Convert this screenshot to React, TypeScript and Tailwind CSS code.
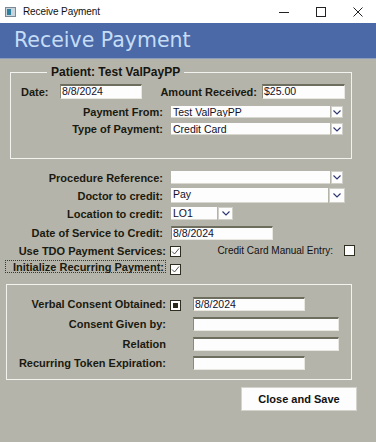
import React from 'react'

const LABEL = "text-[11px] font-bold text-[#1a1a10] leading-[12px] whitespace-nowrap"

function TextBox({ value = '', w, h = 15 }: { value?: string; w: number; h?: number }) {
    return (
        <div
            style={{ width: w, height: h }}
            className="bg-[#fdfdfd] border-t-2 border-l border-t-[#6e6e5e] border-l-[#8a8a7a] border-b border-r border-b-[#e8e8e0] border-r-[#e8e8e0] text-[10.5px] leading-[11px] text-[#10102a] pl-[1px] overflow-hidden whitespace-nowrap"
        >
            {value}
        </div>
    )
}

function Chevron() {
    return (
        <svg width="8" height="5" viewBox="0 0 8 5">
            <polyline points="0.5,0.5 4,4 7.5,0.5" fill="none" stroke="#2b3570" strokeWidth="1.1" />
        </svg>
    )
}

function Combo({ value = '', w, h = 12, btn = 12 }: { value?: string; w: number; h?: number; btn?: number }) {
    return (
        <div style={{ width: w, height: h }} className="flex gap-[1px]">
            <div className="flex-1 bg-[#fdfdfd] border-b border-[#d8d8d0] text-[10.5px] leading-[12px] text-[#10102a] pl-[2px] overflow-hidden whitespace-nowrap">
                {value}
            </div>
            <div style={{ width: btn }} className="bg-[#fdfdfd] border border-[#d0d0c8] flex items-center justify-center">
                <Chevron />
            </div>
        </div>
    )
}

function Check({ state }: { state: 'on' | 'off' | 'fill' }) {
    return (
        <div className="w-[11px] h-[11px] bg-[#fdfdfd] border border-[#2e2e20] flex items-center justify-center shrink-0">
            {state === 'on' && (
                <svg width="9" height="9" viewBox="0 0 9 9">
                    <polyline points="1,4.5 3.5,7 8,1.5" fill="none" stroke="#555550" strokeWidth="1" />
                </svg>
            )}
            {state === 'fill' && <div className="w-[5px] h-[5px] bg-[#2a2a1c]" />}
        </div>
    )
}

export default function App() {
    return (
        <div className="w-[376px] h-[442px] bg-[#b5b4aa] overflow-hidden font-['Liberation_Sans',Arial,sans-serif]">
            {/* window title bar */}
            <div className="h-[23px] bg-white flex items-center">
                <div className="ml-[5px] w-[11px] h-[10px] bg-[#c8d4dc] border border-[#7a8898] flex items-center pl-[1px]">
                    <div className="w-[4px] h-[6px] bg-[#2f7f9f]" />
                </div>
                <span className="ml-[7px] text-[10px] text-[#111] tracking-[-0.1px]">Receive Payment</span>
                <div className="ml-auto flex items-center">
                    <svg width="12" height="12" viewBox="0 0 12 12" className="mr-[25px]">
                        <line x1="1" y1="6.5" x2="11" y2="6.5" stroke="#222" strokeWidth="1" />
                    </svg>
                    <svg width="12" height="12" viewBox="0 0 12 12" className="mr-[25px]">
                        <rect x="1.5" y="1.5" width="9" height="9" fill="none" stroke="#222" strokeWidth="1" />
                    </svg>
                    <svg width="12" height="12" viewBox="0 0 12 12" className="mr-[12px]">
                        <path d="M1.5 1.5 L10.5 10.5 M10.5 1.5 L1.5 10.5" stroke="#222" strokeWidth="1" />
                    </svg>
                </div>
            </div>

            {/* header */}
            <div className="h-[36px] bg-[#4a69a6] border-b border-[#8c9cbc] flex items-center pl-[14px]">
                <span className="text-[20.5px] text-[#c5dcf7] font-['DejaVu_Sans',sans-serif] leading-none">Receive Payment</span>
            </div>

            {/* patient group */}
            <fieldset className="ml-[10px] mt-[6px] w-[342px] border border-[#f2f2ee] pb-[23px] px-0 m-0">
                <legend className="ml-[36px] px-[4px] text-[12px] font-bold text-[#151510] leading-[14px]">
                    Patient: Test ValPayPP
                </legend>
                <div className="flex items-center mt-[5px]">
                    <div className={`${LABEL} w-[49px] pl-[10px]`}>Date:</div>
                    <TextBox value="8/8/2024" w={82} />
                    <div className={`${LABEL} w-[120px] text-right pr-[5px]`}>Amount Received:</div>
                    <TextBox value="$25.00" w={83} />
                </div>
                <div className="flex items-center mt-[7px]">
                    <div className={`${LABEL} w-[152px] text-right`}>Payment From:</div>
                    <div className="ml-[8px]"><Combo value="Test ValPayPP" w={172} /></div>
                </div>
                <div className="flex items-center mt-[5px]">
                    <div className={`${LABEL} w-[152px] text-right`}>Type of Payment:</div>
                    <div className="ml-[8px]"><Combo value="Credit Card" w={172} /></div>
                </div>
            </fieldset>

            {/* credit section */}
            <div className="flex items-center mt-[12px]">
                <div className={`${LABEL} w-[163px] text-right`}>Procedure Reference:</div>
                <div className="ml-[8px]"><Combo w={172} h={13} /></div>
            </div>
            <div className="flex items-center mt-[4px]">
                <div className={`${LABEL} w-[163px] text-right`}>Doctor to credit:</div>
                <div className="ml-[8px]"><Combo value="Pay" w={174} h={15} btn={16} /></div>
            </div>
            <div className="flex items-center mt-[4px]">
                <div className={`${LABEL} w-[163px] text-right`}>Location to credit:</div>
                <div className="ml-[8px]"><Combo value="LO1" w={62} h={13} btn={15} /></div>
            </div>
            <div className="flex items-center mt-[6px]">
                <div className={`${LABEL} w-[163px] text-right`}>Date of Service to Credit:</div>
                <div className="ml-[8px]"><TextBox value="8/8/2024" w={102} h={14} /></div>
            </div>
            <div className="flex items-start mt-[5px] h-[12px]">
                <div className={`${LABEL} w-[166px] text-right`}>Use TDO Payment Services:</div>
                <div className="ml-[4px] mt-[1px]"><Check state="on" /></div>
                <div className="w-[152px] text-right text-[10px] leading-[12px] text-[#111] whitespace-nowrap">
                    Credit Card Manual Entry:
                </div>
                <div className="ml-[11px]"><Check state="off" /></div>
            </div>
            <div className="flex items-start mt-[3px]">
                <div className={`${LABEL} ml-[5px] w-[161px] h-[13px] text-right border border-dotted border-[#3a3a30] pr-[1px]`}>
                    Initialize Recurring Payment:
                </div>
                <div className="ml-[4px] mt-[4px]"><Check state="on" /></div>
            </div>

            {/* consent group */}
            <div className="ml-[6px] mt-[9px] w-[346px] border border-[#f2f2ee] pt-[12px] pb-[9px]">
                <div className="flex items-center">
                    <div className={`${LABEL} w-[159px] text-right`}>Verbal Consent Obtained:</div>
                    <div className="w-[27px] pl-[4px] pt-[3px]"><Check state="fill" /></div>
                    <TextBox value="8/8/2024" w={112} h={14} />
                </div>
                <div className="flex items-center mt-[6px]">
                    <div className={`${LABEL} w-[159px] text-right`}>Consent Given by:</div>
                    <div className="w-[27px]" />
                    <TextBox w={146} h={14} />
                </div>
                <div className="flex items-center mt-[6px]">
                    <div className={`${LABEL} w-[159px] text-right`}>Relation</div>
                    <div className="w-[27px]" />
                    <TextBox w={146} h={14} />
                </div>
                <div className="flex items-center mt-[5px]">
                    <div className={`${LABEL} w-[159px] text-right`}>Recurring Token Expiration:</div>
                    <div className="w-[27px]" />
                    <TextBox w={112} h={14} />
                </div>
            </div>

            <button
                type="button"
                className="block ml-[241px] mt-[7px] w-[116px] h-[24px] bg-[#fdfdfd] border border-[#d4d4cc] text-[11px] font-bold text-[#111]"
            >
                Close and Save
            </button>
        </div>
    )
}
